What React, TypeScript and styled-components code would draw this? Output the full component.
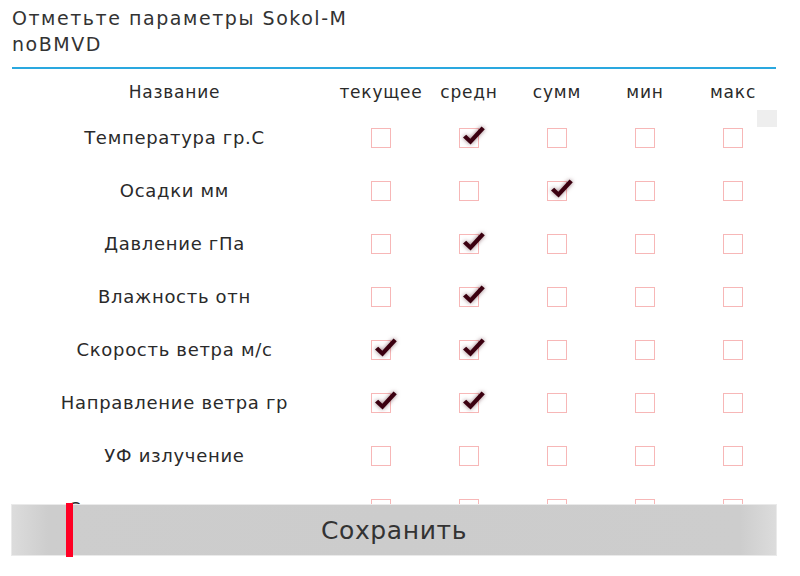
import React, { useState } from "react";
import styled, { createGlobalStyle } from "styled-components";

const GlobalStyle = createGlobalStyle`
  html, body {
    margin: 0;
    padding: 0;
    background: #fff;
    font-family: "DejaVu Sans", "Open Sans", sans-serif;
    color: #222;
  }
`;

const Page = styled.div`
  width: 800px;
  height: 576px;
  position: relative;
  overflow: hidden;
`;

const Title = styled.div`
  padding: 5px 12px 0;
  font-size: 19px;
  line-height: 26px;
  letter-spacing: 1.55px;
  color: #333;
  height: 67px;
  box-sizing: border-box;
`;

const Divider = styled.div`
  margin: 0 24px 0 12px;
  height: 2px;
  background: #2aa8df;
`;

const Scroll = styled.div`
  height: 436px;
  overflow: hidden;
  position: relative;
`;

const Grid = styled.div`
  display: grid;
  grid-template-columns: 325px repeat(5, 88px);
  margin-left: 12px;
`;

const HeadCell = styled.div`
  height: 42px;
  padding-top: 4px;
  box-sizing: border-box;
  display: flex;
  align-items: center;
  justify-content: center;
  font-size: 17px;
  letter-spacing: 0.8px;
  color: #2a2a2a;
`;

const NameCell = styled.div`
  height: 53px;
  display: flex;
  align-items: center;
  justify-content: center;
  font-size: 18px;
  letter-spacing: 0.7px;
  color: #2a2a2a;
  white-space: nowrap;
`;

const BoxCell = styled.div`
  height: 53px;
  display: flex;
  align-items: center;
  justify-content: center;
`;

const Box = styled.div`
  width: 20px;
  height: 20px;
  box-sizing: border-box;
  border: 1.5px solid #f7b7b7;
  position: relative;
  cursor: pointer;
`;

const Check = styled.svg`
  position: absolute;
  left: 1px;
  top: -5px;
  width: 25px;
  height: 22px;
  filter: drop-shadow(0 0 2px rgba(60, 0, 15, 0.55));
`;

const Thumb = styled.div`
  position: absolute;
  right: 23px;
  top: 41px;
  width: 20px;
  height: 17px;
  background: #eeeeee;
`;

const SaveButton = styled.button`
  display: flex;
  align-items: center;
  justify-content: center;
  position: relative;
  margin: 0 24px 0 12px;
  width: 764px;
  height: 50px;
  padding: 0;
  border: none;
  font-family: inherit;
  font-size: 25px;
  letter-spacing: 0.6px;
  color: #333;
  background: linear-gradient(
    to right,
    #dcdcdc 0px,
    #cdcdcd 36px,
    #cccccc 50%,
    #cdcdcd calc(100% - 36px),
    #dcdcdc 100%
  );
  box-shadow: 0 0 0 1px #eaeaea;
`;

const Marker = styled.span`
  position: absolute;
  left: 54px;
  top: -2px;
  width: 7px;
  height: 54px;
  background: #ff0024;
`;

const columns = ["текущее", "средн", "сумм", "мин", "макс"];

const initialRows: { name: string; checks: boolean[] }[] = [
  { name: "Температура гр.С", checks: [false, true, false, false, false] },
  { name: "Осадки мм", checks: [false, false, true, false, false] },
  { name: "Давление гПа", checks: [false, true, false, false, false] },
  { name: "Влажность отн", checks: [false, true, false, false, false] },
  { name: "Скорость ветра м/с", checks: [true, true, false, false, false] },
  { name: "Направление ветра гр", checks: [true, true, false, false, false] },
  { name: "УФ излучение", checks: [false, false, false, false, false] },
  { name: "Солнечная радиация", checks: [false, false, false, false, false] },
];

const CheckMark = () => (
  <Check viewBox="0 0 25 22">
    <path
      d="M2 13.5 L5.2 10.8 L9.3 14.8 L20.5 2.5 L23.8 5.2 L9.6 20.6 Z"
      fill="#3b0010"
    />
  </Check>
);

const App = () => {
  const [rows, setRows] = useState(initialRows);

  const toggle = (r: number, c: number) => {
    setRows((prev) =>
      prev.map((row, i) =>
        i === r
          ? { ...row, checks: row.checks.map((v, j) => (j === c ? !v : v)) }
          : row
      )
    );
  };

  return (
    <Page>
      <GlobalStyle />
      <Title>
        Отметьте параметры Sokol-M
        <br />
        noBMVD
      </Title>
      <Divider />
      <Scroll>
        <Grid>
          <HeadCell>Название</HeadCell>
          {columns.map((c) => (
            <HeadCell key={c}>{c}</HeadCell>
          ))}
          {rows.map((row, r) => (
            <React.Fragment key={row.name}>
              <NameCell>{row.name}</NameCell>
              {row.checks.map((v, c) => (
                <BoxCell key={c}>
                  <Box onClick={() => toggle(r, c)}>{v && <CheckMark />}</Box>
                </BoxCell>
              ))}
            </React.Fragment>
          ))}
        </Grid>
        <Thumb />
      </Scroll>
      <SaveButton>
        <Marker />
        Сохранить
      </SaveButton>
    </Page>
  );
};

export default App;
